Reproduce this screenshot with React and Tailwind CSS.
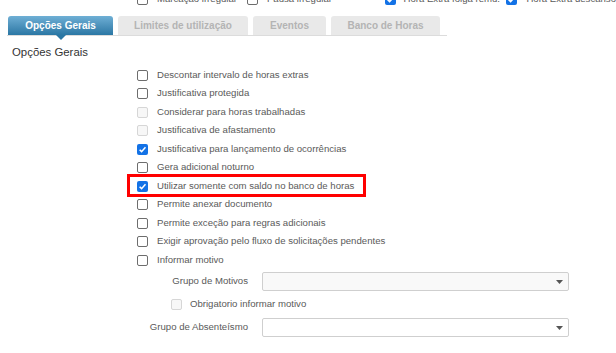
function Box({ checked = false, disabled = false }) {
  if (checked) {
    return (
      <span className="flex h-[11px] w-[11px] shrink-0 items-center justify-center rounded-[2px] bg-[#1372e6]">
        <svg width="9" height="9" viewBox="0 0 10 10">
          <path d="M1.8 5.2 L4 7.4 L8.3 2.6" fill="none" stroke="#fff" strokeWidth="1.7" />
        </svg>
      </span>
    );
  }
  return (
    <span
      className={
        disabled
          ? 'h-[11px] w-[11px] shrink-0 rounded-[2px] border border-[#d6d6d6] bg-[#f7f7f7]'
          : 'h-[11px] w-[11px] shrink-0 rounded-[2px] border border-[#6d6d6d] bg-white'
      }
    />
  );
}

function Check({ label, checked, disabled, highlight }) {
  return (
    <div className="relative flex h-[18.5px] items-center gap-[9px]">
      <Box checked={checked} disabled={disabled} />
      <span className="whitespace-nowrap text-[9.6px] text-[#5a5a5a]">{label}</span>
      {highlight && (
        <div className="absolute -left-[10px] -top-[2.5px] h-[23px] w-[239px] border-[3px] border-[#ff0000]" />
      )}
    </div>
  );
}

function Select({ disabled }) {
  return (
    <div
      className={
        'flex h-[19px] w-[307px] items-center justify-end rounded-[2px] border border-[#cfcfcf] pr-[5px] ' +
        (disabled ? 'bg-[#f9f9f9]' : 'bg-white')
      }
    >
      <svg width="7" height="4" viewBox="0 0 7 4">
        <path d="M0 0 H7 L3.5 4 Z" fill="#555" />
      </svg>
    </div>
  );
}

const options = [
  { label: 'Descontar intervalo de horas extras' },
  { label: 'Justificativa protegida' },
  { label: 'Considerar para horas trabalhadas', disabled: true },
  { label: 'Justificativa de afastamento', disabled: true },
  { label: 'Justificativa para lançamento de ocorrências', checked: true },
  { label: 'Gera adicional noturno' },
  { label: 'Utilizar somente com saldo no banco de horas', checked: true, highlight: true },
  { label: 'Permite anexar documento' },
  { label: 'Permite exceção para regras adicionais' },
  { label: 'Exigir aprovação pelo fluxo de solicitações pendentes' },
  { label: 'Informar motivo' },
];

export default function App() {
  return (
    <div className="relative h-[353px] w-[616px] overflow-hidden bg-white font-['Liberation_Sans',Arial,sans-serif]">
      {/* linha de cima, cortada pela borda */}
      <div className="-mt-[7px] flex h-[12px] items-center pl-[137px] text-[9.6px] text-[#5a5a5a]">
        <div className="flex w-[119px] items-center gap-[9px]"><Box /><span>Marcação irregular</span></div>
        <div className="flex w-[149px] items-center gap-[9px]"><Box /><span>Pausa irregular</span></div>
        <div className="flex w-[132px] items-center gap-[8px]"><Box checked /><span>Hora Extra folga remu.</span></div>
        <div className="flex items-center gap-[9px] whitespace-nowrap"><Box checked /><span>Hora Extra descanso</span></div>
      </div>

      {/* abas */}
      <div className="ml-[7px] mt-[11px] flex h-[20px] w-[440px] items-end gap-[5px] border-b border-[#dcdcdc]">
        <div className="relative ml-[1px] flex h-[19px] w-[105px] items-center justify-center rounded-t-[3px] bg-gradient-to-b from-[#6eafd5] to-[#2a77a4] text-[10px] font-bold text-white">
          Opções Gerais
          <span className="absolute left-1/2 top-full -ml-[5px] h-0 w-0 border-x-[5px] border-t-[5px] border-x-transparent border-t-[#2a77a4]" />
        </div>
        <div className="flex h-[19px] w-[130px] items-center justify-center rounded-t-[3px] bg-[#e9e9e9] text-[10px] font-bold text-[#b4b4b4]">
          Limites de utilização
        </div>
        <div className="flex h-[19px] w-[73px] items-center justify-center rounded-t-[3px] bg-[#e9e9e9] text-[10px] font-bold text-[#b4b4b4]">
          Eventos
        </div>
        <div className="flex h-[19px] w-[109px] items-center justify-center rounded-t-[3px] bg-[#e9e9e9] text-[10px] font-bold text-[#b4b4b4]">
          Banco de Horas
        </div>
      </div>

      <div className="mt-[9px] pl-[12px] text-[11.4px] leading-[14px] text-[#333]">Opções Gerais</div>

      <div className="mt-[6.75px] pl-[137px]">
        {options.map((o) => (
          <Check key={o.label} {...o} />
        ))}
      </div>

      <div className="mt-[2.75px] flex items-center gap-[14px]">
        <span className="w-[248px] text-right text-[9.6px] text-[#5a5a5a]">Grupo de Motivos</span>
        <Select disabled />
      </div>

      <div className="mt-[3.75px] flex h-[18.5px] items-center gap-[8px] pl-[171px]">
        <Box disabled />
        <span className="text-[9.6px] text-[#5a5a5a]">Obrigatorio informar motivo</span>
      </div>

      <div className="mt-[4.75px] flex items-center gap-[14px]">
        <span className="w-[248px] text-right text-[9.6px] text-[#5a5a5a]">Grupo de Absenteísmo</span>
        <Select />
      </div>
    </div>
  );
}
